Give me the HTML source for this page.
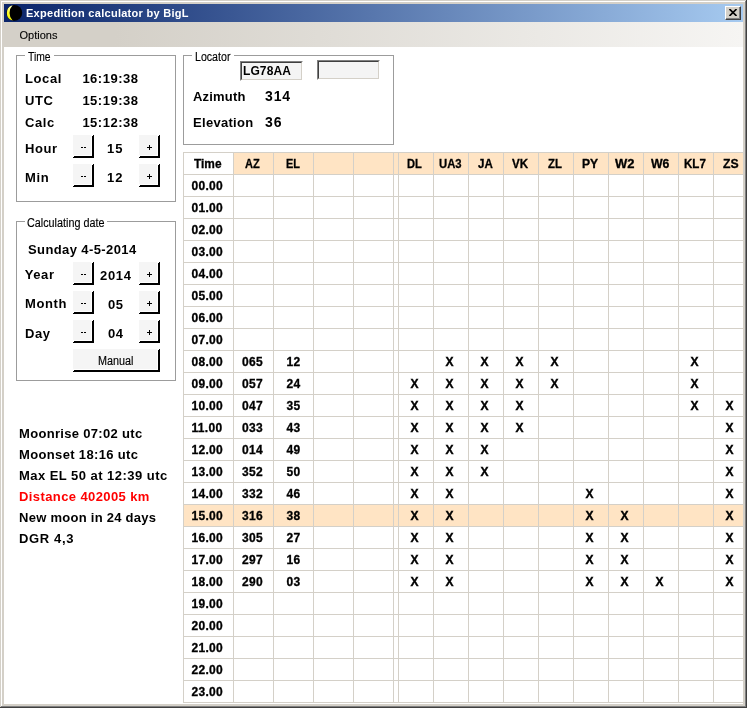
<!DOCTYPE html><html><head><meta charset="utf-8"><title>Expedition calculator by BigL</title><style>
*{margin:0;padding:0;box-sizing:border-box}
html,body{width:747px;height:708px;overflow:hidden;background:#fff}
body{font-family:"Liberation Sans",sans-serif;position:relative;color:#000}
.a{position:absolute}
#root{position:absolute;left:0;top:0;width:747px;height:708px;will-change:transform;transform:translateZ(0)}
#fr1{left:0;top:0;width:747px;height:708px;background:#404040}
#fr2{left:0;top:0;width:746px;height:707px;background:#d4d0c8}
#fr3{left:1px;top:1px;width:745px;height:706px;background:#808080}
#fr4{left:1px;top:1px;width:744px;height:705px;background:#fff}
#fr5{left:2px;top:2px;width:743px;height:704px;background:#d4d0c8}
#title{left:4px;top:4px;width:739px;height:18px;background:linear-gradient(to right,#0a246a,#a6caf0)}
#ttext{left:26px;top:6px;font-weight:bold;font-size:11px;line-height:14px;color:#fff;white-space:nowrap;letter-spacing:.28px}
#menu{left:4px;top:22px;width:739px;height:25px;background:linear-gradient(to right,#d4d0c8 0%,#d4d0c8 15%,#f6f5f3 100%)}
#mtext{left:19.5px;top:28px;font-size:11px;line-height:14px;-webkit-text-stroke:.1px #000}
#client{left:4px;top:47px;width:739px;height:657px;background:#fff;overflow:hidden}
#close{left:725px;top:6px;width:16px;height:14px;background:#d4d0c8;border:1px solid;border-color:#fff #404040 #404040 #fff;box-shadow:inset -1px -1px 0 #808080}
.grp{border:1px solid #9c9c9c}
.legbg{background:#fff;height:3px}
.leg{-webkit-text-stroke:.15px #000;font-size:12px;line-height:14px;white-space:nowrap;color:#000;transform-origin:0 0}
.lb{font-weight:bold;font-size:13px;line-height:16px;white-space:nowrap;letter-spacing:.6px}
.btn{background:#000}
.btn i{position:absolute;left:0;top:0;right:2px;bottom:2px;background:#fff}
.btn u{position:absolute;right:1px;top:0;width:1px;height:1px;background:#fff}
.btn s{position:absolute;left:0;bottom:1px;width:1px;height:1px;background:#fff}
.btn b{position:absolute;left:0;top:0;right:3px;bottom:3px;background:#f5f5f5}
.bt{-webkit-text-stroke:.15px #000;font-size:12px;line-height:14px;white-space:nowrap;transform-origin:0 0}
.vl{width:1px;top:152px;height:551px;background:#d4d0c8}
.hl{left:183px;width:560px;height:1px;background:#d4d0c8}
.t{font-weight:bold;font-size:12px;line-height:14px;white-space:nowrap;-webkit-text-stroke:.3px #000}
.tt{letter-spacing:.3px}
.hs{transform:scaleX(.92);transform-origin:0 0}
.x{font-weight:bold;font-size:12px;line-height:14px;width:35px;text-align:center;-webkit-text-stroke:.4px #000}
.inp{background:#f4f4f4;border:1px solid;border-color:#808080 #fff #fff #808080}
.inp i{position:absolute;left:0;top:0;right:0;bottom:0;border:1px solid;border-color:#404040 #d4d0c8 #d4d0c8 #404040}
</style></head><body><div id="root">
<div class="a" id="fr1"></div><div class="a" id="fr2"></div><div class="a" id="fr3"></div><div class="a" id="fr4"></div><div class="a" id="fr5"></div>
<div class="a" id="title"></div>
<svg class="a" style="left:6px;top:5px" width="17" height="16" viewBox="0 0 17 16"><defs><linearGradient id="mg" x1="0" y1="0" x2="0" y2="1"><stop offset="0" stop-color="#ffffd0"/><stop offset=".45" stop-color="#ffff30"/><stop offset="1" stop-color="#f0f000"/></linearGradient></defs><circle cx="8.3" cy="7.9" r="7.9" fill="#000"/><path d="M6.6 0.3 A7.9 7.9 0 0 0 6.6 15.5 A11 11 0 0 1 6.6 0.3Z" fill="url(#mg)"/></svg>
<div class="a" id="ttext">Expedition calculator by BigL</div>
<div class="a" id="close"></div>
<svg class="a" style="left:729px;top:9px" width="8" height="7" viewBox="0 0 8 7"><path d="M0.5 0 L7.5 7 M7.5 0 L0.5 7" stroke="#000" stroke-width="1.6" fill="none"/></svg>
<div class="a" id="menu"></div><div class="a" id="mtext">Options</div>
<div class="a" id="client"></div>
<div class="a grp" style="left:16px;top:55px;width:160px;height:147px"></div>
<div class="a legbg" style="left:25px;top:54px;width:29px"></div>
<div class="a leg" style="left:27.5px;top:50px;transform:scaleX(0.86)">Time</div>
<div class="a grp" style="left:16px;top:221px;width:160px;height:160px"></div>
<div class="a legbg" style="left:25px;top:220px;width:82px"></div>
<div class="a leg" style="left:27.3px;top:216px;transform:scaleX(0.9)">Calculating date</div>
<div class="a grp" style="left:183px;top:55px;width:211px;height:90px"></div>
<div class="a legbg" style="left:192px;top:54px;width:42px"></div>
<div class="a leg" style="left:194.5px;top:50px;transform:scaleX(0.885)">Locator</div>
<div class="a lb" style="left:25px;top:71px;letter-spacing:0.6px;font-size:13px">Local</div>
<div class="a lb" style="left:82.4px;top:71px;letter-spacing:0.5px;font-size:13px">16:19:38</div>
<div class="a lb" style="left:25px;top:93px;letter-spacing:0.6px;font-size:13px">UTC</div>
<div class="a lb" style="left:82.4px;top:93px;letter-spacing:0.5px;font-size:13px">15:19:38</div>
<div class="a lb" style="left:25px;top:115px;letter-spacing:0.6px;font-size:13px">Calc</div>
<div class="a lb" style="left:82.4px;top:115px;letter-spacing:0.5px;font-size:13px">15:12:38</div>
<div class="a lb" style="left:25px;top:141px;letter-spacing:0.6px;font-size:13px">Hour</div>
<div class="a lb" style="left:107px;top:141px;letter-spacing:0.9px;font-size:13px">15</div>
<div class="a lb" style="left:25px;top:170px;letter-spacing:0.6px;font-size:13px">Min</div>
<div class="a lb" style="left:107px;top:170px;letter-spacing:0.9px;font-size:13px">12</div>
<div class="a lb" style="left:28px;top:242px;letter-spacing:0.4px;font-size:13px">Sunday 4-5-2014</div>
<div class="a lb" style="left:24.7px;top:267px;letter-spacing:0.6px;font-size:13px">Year</div>
<div class="a lb" style="left:100px;top:268px;letter-spacing:0.7px;font-size:13px">2014</div>
<div class="a lb" style="left:25px;top:296px;letter-spacing:0.6px;font-size:13px">Month</div>
<div class="a lb" style="left:108px;top:297px;letter-spacing:0.6px;font-size:13px">05</div>
<div class="a lb" style="left:25px;top:326px;letter-spacing:0.6px;font-size:13px">Day</div>
<div class="a lb" style="left:108px;top:326px;letter-spacing:0.6px;font-size:13px">04</div>
<div class="a lb" style="left:193px;top:89px;letter-spacing:0.2px;font-size:13px">Azimuth</div>
<div class="a lb" style="left:265px;top:88px;letter-spacing:0.9px;font-size:14px">314</div>
<div class="a lb" style="left:193px;top:115px;letter-spacing:0.3px;font-size:13px">Elevation</div>
<div class="a lb" style="left:265px;top:114px;letter-spacing:0.9px;font-size:14px">36</div>
<div class="a btn" style="left:73px;top:135px;width:21px;height:23px"><i></i><b></b><u></u><s></s></div>
<div class="a" style="left:81px;top:147px;width:2px;height:1px;background:#000"></div><div class="a" style="left:84px;top:147px;width:2px;height:1px;background:#000"></div>
<div class="a btn" style="left:139px;top:135px;width:21px;height:23px"><i></i><b></b><u></u><s></s></div>
<div class="a" style="left:147px;top:147px;width:5px;height:1px;background:#000"></div><div class="a" style="left:149px;top:145px;width:1px;height:5px;background:#000"></div>
<div class="a btn" style="left:73px;top:164px;width:21px;height:23px"><i></i><b></b><u></u><s></s></div>
<div class="a" style="left:81px;top:176px;width:2px;height:1px;background:#000"></div><div class="a" style="left:84px;top:176px;width:2px;height:1px;background:#000"></div>
<div class="a btn" style="left:139px;top:164px;width:21px;height:23px"><i></i><b></b><u></u><s></s></div>
<div class="a" style="left:147px;top:176px;width:5px;height:1px;background:#000"></div><div class="a" style="left:149px;top:174px;width:1px;height:5px;background:#000"></div>
<div class="a btn" style="left:73px;top:262px;width:21px;height:23px"><i></i><b></b><u></u><s></s></div>
<div class="a" style="left:81px;top:274px;width:2px;height:1px;background:#000"></div><div class="a" style="left:84px;top:274px;width:2px;height:1px;background:#000"></div>
<div class="a btn" style="left:139px;top:262px;width:21px;height:23px"><i></i><b></b><u></u><s></s></div>
<div class="a" style="left:147px;top:274px;width:5px;height:1px;background:#000"></div><div class="a" style="left:149px;top:272px;width:1px;height:5px;background:#000"></div>
<div class="a btn" style="left:73px;top:291px;width:21px;height:23px"><i></i><b></b><u></u><s></s></div>
<div class="a" style="left:81px;top:303px;width:2px;height:1px;background:#000"></div><div class="a" style="left:84px;top:303px;width:2px;height:1px;background:#000"></div>
<div class="a btn" style="left:139px;top:291px;width:21px;height:23px"><i></i><b></b><u></u><s></s></div>
<div class="a" style="left:147px;top:303px;width:5px;height:1px;background:#000"></div><div class="a" style="left:149px;top:301px;width:1px;height:5px;background:#000"></div>
<div class="a btn" style="left:73px;top:320px;width:21px;height:23px"><i></i><b></b><u></u><s></s></div>
<div class="a" style="left:81px;top:332px;width:2px;height:1px;background:#000"></div><div class="a" style="left:84px;top:332px;width:2px;height:1px;background:#000"></div>
<div class="a btn" style="left:139px;top:320px;width:21px;height:23px"><i></i><b></b><u></u><s></s></div>
<div class="a" style="left:147px;top:332px;width:5px;height:1px;background:#000"></div><div class="a" style="left:149px;top:330px;width:1px;height:5px;background:#000"></div>
<div class="a btn" style="left:73px;top:349px;width:87px;height:23px"><i></i><b></b><u></u><s></s></div>
<div class="a bt" style="left:98px;top:354px;transform:scaleX(.9)">Manual</div>
<div class="a inp" style="left:240px;top:61px;width:63px;height:20px"><i></i></div>
<div class="a" style="left:243px;top:64px;font-weight:bold;font-size:12px;line-height:14px;letter-spacing:.1px">LG78AA</div>
<div class="a inp" style="left:317px;top:60px;width:63px;height:20px"><i></i></div>
<div class="a lb" style="left:19px;top:426px;color:#000;letter-spacing:0.32px">Moonrise 07:02 utc</div>
<div class="a lb" style="left:19px;top:447px;color:#000;letter-spacing:0.35px">Moonset 18:16 utc</div>
<div class="a lb" style="left:19px;top:468px;color:#000;letter-spacing:0.46px">Max EL 50 at 12:39 utc</div>
<div class="a lb" style="left:19px;top:489px;color:#ff0000;letter-spacing:0.4px">Distance 402005 km</div>
<div class="a lb" style="left:19px;top:510px;color:#000;letter-spacing:0.27px">New moon in 24 days</div>
<div class="a lb" style="left:19px;top:531px;color:#000;letter-spacing:0.65px">DGR 4,3</div>
<div class="a" style="left:234px;top:153px;width:509px;height:21px;background:#ffe4c4"></div>
<div class="a" style="left:184px;top:505px;width:559px;height:21px;background:#ffe4c4"></div>
<div class="a hl" style="top:152px"></div>
<div class="a hl" style="top:174px"></div>
<div class="a hl" style="top:196px"></div>
<div class="a hl" style="top:218px"></div>
<div class="a hl" style="top:240px"></div>
<div class="a hl" style="top:262px"></div>
<div class="a hl" style="top:284px"></div>
<div class="a hl" style="top:306px"></div>
<div class="a hl" style="top:328px"></div>
<div class="a hl" style="top:350px"></div>
<div class="a hl" style="top:372px"></div>
<div class="a hl" style="top:394px"></div>
<div class="a hl" style="top:416px"></div>
<div class="a hl" style="top:438px"></div>
<div class="a hl" style="top:460px"></div>
<div class="a hl" style="top:482px"></div>
<div class="a hl" style="top:504px"></div>
<div class="a hl" style="top:526px"></div>
<div class="a hl" style="top:548px"></div>
<div class="a hl" style="top:570px"></div>
<div class="a hl" style="top:592px"></div>
<div class="a hl" style="top:614px"></div>
<div class="a hl" style="top:636px"></div>
<div class="a hl" style="top:658px"></div>
<div class="a hl" style="top:680px"></div>
<div class="a hl" style="top:702px"></div>
<div class="a vl" style="left:183px"></div>
<div class="a vl" style="left:233px"></div>
<div class="a vl" style="left:273px"></div>
<div class="a vl" style="left:313px"></div>
<div class="a vl" style="left:353px"></div>
<div class="a vl" style="left:393px"></div>
<div class="a vl" style="left:398px"></div>
<div class="a vl" style="left:433px"></div>
<div class="a vl" style="left:468px"></div>
<div class="a vl" style="left:503px"></div>
<div class="a vl" style="left:538px"></div>
<div class="a vl" style="left:573px"></div>
<div class="a vl" style="left:608px"></div>
<div class="a vl" style="left:643px"></div>
<div class="a vl" style="left:678px"></div>
<div class="a vl" style="left:713px"></div>
<div class="a t" style="left:194.37px;top:157px;transform:scaleX(0.989);transform-origin:0 0">Time</div>
<div class="a t" style="left:245.07px;top:157px;transform:scaleX(0.921);transform-origin:0 0">AZ</div>
<div class="a t" style="left:285.82px;top:157px;transform:scaleX(0.907);transform-origin:0 0">EL</div>
<div class="a t" style="left:407.3px;top:157px;transform:scaleX(0.926);transform-origin:0 0">DL</div>
<div class="a t" style="left:438.75px;top:157px;transform:scaleX(0.941);transform-origin:0 0">UA3</div>
<div class="a t" style="left:478.14px;top:157px;transform:scaleX(0.963);transform-origin:0 0">JA</div>
<div class="a t" style="left:512.1px;top:157px;transform:scaleX(0.967);transform-origin:0 0">VK</div>
<div class="a t" style="left:548.12px;top:157px;transform:scaleX(0.945);transform-origin:0 0">ZL</div>
<div class="a t" style="left:582.46px;top:157px;transform:scaleX(1.007);transform-origin:0 0">PY</div>
<div class="a t" style="left:615.46px;top:157px;transform:scaleX(1.079);transform-origin:0 0">W2</div>
<div class="a t" style="left:651.17px;top:157px;transform:scaleX(1.023);transform-origin:0 0">W6</div>
<div class="a t" style="left:683.68px;top:157px;transform:scaleX(0.964);transform-origin:0 0">KL7</div>
<div class="a t" style="left:722.7px;top:157px;transform:scaleX(1.016);transform-origin:0 0">ZS</div>
<div class="a t tt" style="left:191.5px;top:179px">00.00</div>
<div class="a t tt" style="left:191.5px;top:201px">01.00</div>
<div class="a t tt" style="left:191.5px;top:223px">02.00</div>
<div class="a t tt" style="left:191.5px;top:245px">03.00</div>
<div class="a t tt" style="left:191.5px;top:267px">04.00</div>
<div class="a t tt" style="left:191.5px;top:289px">05.00</div>
<div class="a t tt" style="left:191.5px;top:311px">06.00</div>
<div class="a t tt" style="left:191.5px;top:333px">07.00</div>
<div class="a t tt" style="left:191.5px;top:355px">08.00</div>
<div class="a t tt" style="left:242px;top:355px">065</div>
<div class="a t tt" style="left:286.5px;top:355px">12</div>
<div class="a x" style="left:432px;top:355px">X</div>
<div class="a x" style="left:467px;top:355px">X</div>
<div class="a x" style="left:502px;top:355px">X</div>
<div class="a x" style="left:537px;top:355px">X</div>
<div class="a x" style="left:677px;top:355px">X</div>
<div class="a t tt" style="left:191.5px;top:377px">09.00</div>
<div class="a t tt" style="left:242px;top:377px">057</div>
<div class="a t tt" style="left:286.5px;top:377px">24</div>
<div class="a x" style="left:397px;top:377px">X</div>
<div class="a x" style="left:432px;top:377px">X</div>
<div class="a x" style="left:467px;top:377px">X</div>
<div class="a x" style="left:502px;top:377px">X</div>
<div class="a x" style="left:537px;top:377px">X</div>
<div class="a x" style="left:677px;top:377px">X</div>
<div class="a t tt" style="left:191.5px;top:399px">10.00</div>
<div class="a t tt" style="left:242px;top:399px">047</div>
<div class="a t tt" style="left:286.5px;top:399px">35</div>
<div class="a x" style="left:397px;top:399px">X</div>
<div class="a x" style="left:432px;top:399px">X</div>
<div class="a x" style="left:467px;top:399px">X</div>
<div class="a x" style="left:502px;top:399px">X</div>
<div class="a x" style="left:677px;top:399px">X</div>
<div class="a x" style="left:712px;top:399px">X</div>
<div class="a t tt" style="left:191.5px;top:421px">11.00</div>
<div class="a t tt" style="left:242px;top:421px">033</div>
<div class="a t tt" style="left:286.5px;top:421px">43</div>
<div class="a x" style="left:397px;top:421px">X</div>
<div class="a x" style="left:432px;top:421px">X</div>
<div class="a x" style="left:467px;top:421px">X</div>
<div class="a x" style="left:502px;top:421px">X</div>
<div class="a x" style="left:712px;top:421px">X</div>
<div class="a t tt" style="left:191.5px;top:443px">12.00</div>
<div class="a t tt" style="left:242px;top:443px">014</div>
<div class="a t tt" style="left:286.5px;top:443px">49</div>
<div class="a x" style="left:397px;top:443px">X</div>
<div class="a x" style="left:432px;top:443px">X</div>
<div class="a x" style="left:467px;top:443px">X</div>
<div class="a x" style="left:712px;top:443px">X</div>
<div class="a t tt" style="left:191.5px;top:465px">13.00</div>
<div class="a t tt" style="left:242px;top:465px">352</div>
<div class="a t tt" style="left:286.5px;top:465px">50</div>
<div class="a x" style="left:397px;top:465px">X</div>
<div class="a x" style="left:432px;top:465px">X</div>
<div class="a x" style="left:467px;top:465px">X</div>
<div class="a x" style="left:712px;top:465px">X</div>
<div class="a t tt" style="left:191.5px;top:487px">14.00</div>
<div class="a t tt" style="left:242px;top:487px">332</div>
<div class="a t tt" style="left:286.5px;top:487px">46</div>
<div class="a x" style="left:397px;top:487px">X</div>
<div class="a x" style="left:432px;top:487px">X</div>
<div class="a x" style="left:572px;top:487px">X</div>
<div class="a x" style="left:712px;top:487px">X</div>
<div class="a t tt" style="left:191.5px;top:509px">15.00</div>
<div class="a t tt" style="left:242px;top:509px">316</div>
<div class="a t tt" style="left:286.5px;top:509px">38</div>
<div class="a x" style="left:397px;top:509px">X</div>
<div class="a x" style="left:432px;top:509px">X</div>
<div class="a x" style="left:572px;top:509px">X</div>
<div class="a x" style="left:607px;top:509px">X</div>
<div class="a x" style="left:712px;top:509px">X</div>
<div class="a t tt" style="left:191.5px;top:531px">16.00</div>
<div class="a t tt" style="left:242px;top:531px">305</div>
<div class="a t tt" style="left:286.5px;top:531px">27</div>
<div class="a x" style="left:397px;top:531px">X</div>
<div class="a x" style="left:432px;top:531px">X</div>
<div class="a x" style="left:572px;top:531px">X</div>
<div class="a x" style="left:607px;top:531px">X</div>
<div class="a x" style="left:712px;top:531px">X</div>
<div class="a t tt" style="left:191.5px;top:553px">17.00</div>
<div class="a t tt" style="left:242px;top:553px">297</div>
<div class="a t tt" style="left:286.5px;top:553px">16</div>
<div class="a x" style="left:397px;top:553px">X</div>
<div class="a x" style="left:432px;top:553px">X</div>
<div class="a x" style="left:572px;top:553px">X</div>
<div class="a x" style="left:607px;top:553px">X</div>
<div class="a x" style="left:712px;top:553px">X</div>
<div class="a t tt" style="left:191.5px;top:575px">18.00</div>
<div class="a t tt" style="left:242px;top:575px">290</div>
<div class="a t tt" style="left:286.5px;top:575px">03</div>
<div class="a x" style="left:397px;top:575px">X</div>
<div class="a x" style="left:432px;top:575px">X</div>
<div class="a x" style="left:572px;top:575px">X</div>
<div class="a x" style="left:607px;top:575px">X</div>
<div class="a x" style="left:642px;top:575px">X</div>
<div class="a x" style="left:712px;top:575px">X</div>
<div class="a t tt" style="left:191.5px;top:597px">19.00</div>
<div class="a t tt" style="left:191.5px;top:619px">20.00</div>
<div class="a t tt" style="left:191.5px;top:641px">21.00</div>
<div class="a t tt" style="left:191.5px;top:663px">22.00</div>
<div class="a t tt" style="left:191.5px;top:685px">23.00</div>
</div></body></html>
